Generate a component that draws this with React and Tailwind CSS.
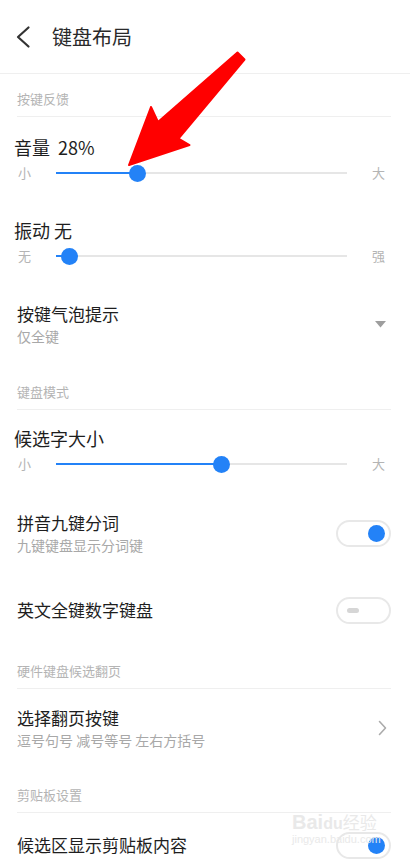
import React from 'react';

const font = { fontFamily: '"Noto Sans CJK SC", "Noto Sans", sans-serif' };

const SectionTitle = ({ children }) => (
  <div className="mx-[17px] mr-[19px] h-[43px] flex items-end pb-[8px] border-b border-[#efefef]">
    <span className="text-[13px] leading-[18px] text-[#b4b4b4]">{children}</span>
  </div>
);

const Slider = ({ title, min, max, value, pt = 'pt-[18px]', pb = 'pb-[17px]' }) => (
  <div className={`${pt} ${pb}`}>
    <div className="pl-[14px] h-[24px] flex items-center text-[18px] leading-[24px] text-[#1e1e1e]">{title}</div>
    <div className="mt-[4px] h-[20px] flex items-center pl-[18px] pr-[25px]">
      <span className="w-[13px] text-[13px] leading-[20px] text-[#b4b4b4]">{min}</span>
      <div className="relative flex-1 mx-[25px] h-[20px] flex items-center">
        <div className="absolute left-0 right-0 h-[2px] bg-[#e6e6e6]" />
        <div className="absolute left-0 h-[2px] bg-[#2382f7]" style={{ width: `${value}%` }} />
        <div
          className="absolute w-[17px] h-[17px] -ml-[8.5px] rounded-full bg-[#2382f7]"
          style={{ left: `${value}%` }}
        />
      </div>
      <span className="w-[13px] text-[13px] leading-[20px] text-[#b4b4b4]">{max}</span>
    </div>
  </div>
);

const Toggle = ({ on }) => (
  <div className="w-[55px] h-[27px] rounded-full border-2 border-[#e8e8e8] bg-white flex items-center">
    {on ? (
      <div className="ml-auto mr-[4px] w-[17px] h-[17px] rounded-full bg-[#2382f7]" />
    ) : (
      <div className="ml-[9px] w-[12px] h-[5px] rounded-full bg-[#d6d6d6]" />
    )}
  </div>
);

const Row = ({ title, sub, right, className = '' }) => (
  <div className={`flex items-center pl-[17px] pr-[19px] ${className}`}>
    <div className="flex-1">
      <div className="text-[17px] leading-[24px] text-[#1e1e1e]">{title}</div>
      {sub && <div className="text-[14px] leading-[20px] text-[#a8a8a8]">{sub}</div>}
    </div>
    {right}
  </div>
);

export default function App() {
  return (
    <div className="relative w-[410px] h-[862px] overflow-hidden bg-white" style={font}>
      <header className="h-[74px] flex items-center border-b border-[#efefef]">
        <svg className="ml-[14px]" width="20" height="24" viewBox="0 0 20 24">
          <path d="M14.5 2.5 L4 12 L14.5 21.5" fill="none" stroke="#333" strokeWidth="2.2" strokeLinecap="round" strokeLinejoin="round" />
        </svg>
        <h1 className="ml-[18px] text-[20px] leading-[28px] text-[#2a2a2a]">键盘布局</h1>
      </header>

      <SectionTitle>按键反馈</SectionTitle>
      <Slider title={<>音量&nbsp;&nbsp;28%</>} min="小" max="大" value={28} />
      <Slider title="振动 无" min="无" max="强" value={4.8} />

      <Row
        className="pt-[19px] pb-[21px]"
        title="按键气泡提示"
        sub="仅全键"
        right={
          <svg className="mr-[5px]" width="11" height="7" viewBox="0 0 11 7">
            <path d="M0 0 H11 L5.5 6.5 Z" fill="#9e9e9e" />
          </svg>
        }
      />

      <SectionTitle>键盘模式</SectionTitle>
      <Slider title="候选字大小" min="小" max="大" value={57} pt="pt-[16px]" pb="pb-[18px]" />

      <Row className="pt-[19px] pb-[19px]" title="拼音九键分词" sub="九键键盘显示分词键" right={<Toggle on />} />
      <Row className="h-[72px]" title="英文全键数字键盘" right={<Toggle />} />

      <SectionTitle>硬件键盘候选翻页</SectionTitle>
      <Row
        className="pt-[17px] pb-[20px]"
        title="选择翻页按键"
        sub="逗号句号 减号等号 左右方括号"
        right={
          <svg className="mr-[4px]" width="9" height="16" viewBox="0 0 9 16">
            <path d="M1.5 1.5 L7.5 8 L1.5 14.5" fill="none" stroke="#ababab" strokeWidth="1.6" strokeLinecap="round" strokeLinejoin="round" />
          </svg>
        }
      />

      <SectionTitle>剪贴板设置</SectionTitle>
      <Row className="h-[64px]" title="候选区显示剪贴板内容" right={<Toggle on />} />

      {/* watermark */}
      <div className="absolute left-[292px] top-[812px] pointer-events-none text-[#e9e9e9] leading-none">
        <div className="text-[20px] font-bold" style={{ fontFamily: '"Liberation Sans", sans-serif' }}>
          Bai<span className="text-[16px]">du</span>
          <span className="text-[17px] font-normal" style={font}>经验</span>
        </div>
        <div className="text-[11px] mt-[2px]" style={{ fontFamily: '"Liberation Sans", sans-serif' }}>jingyan.baidu.com</div>
      </div>

      {/* annotation arrow */}
      <svg className="absolute left-0 top-0 pointer-events-none" width="410" height="862" viewBox="0 0 410 862">
        <path
          d="M237.5 52.5 L158 122 L151 107 L129 165 L189.5 145 L178.5 138.5 L244.5 59.5 Z"
          fill="#ff0000"
          stroke="#ff0000"
          strokeWidth="2"
          strokeLinejoin="round"
        />
      </svg>
    </div>
  );
}
